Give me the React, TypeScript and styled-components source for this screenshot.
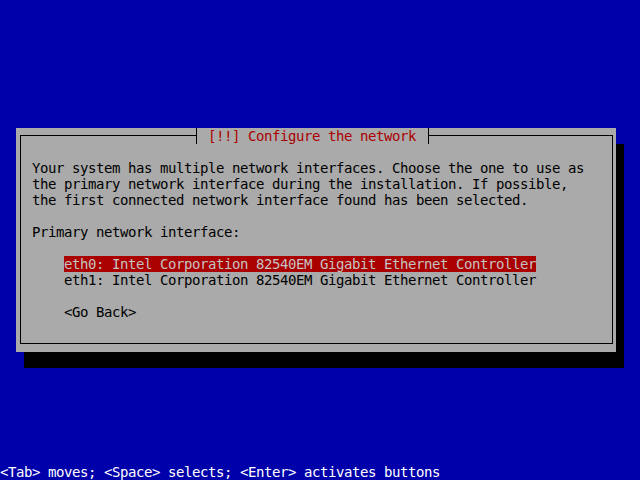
import React from 'react';
import styled, { createGlobalStyle, css } from 'styled-components';

const GlobalStyle = createGlobalStyle`
  html, body {
    margin: 0;
    padding: 0;
    background: #0000aa;
  }
  body {
    width: 640px;
    height: 480px;
    overflow: hidden;
  }
`;

// 80x30 text console, each cell is 8x16
const Screen = styled.div`
  width: 640px;
  height: 480px;
  box-sizing: border-box;
  padding-top: 128px;
  display: flex;
  flex-direction: column;
  background: #0000aa;
  font-family: 'DejaVu Sans Mono', 'Liberation Mono', monospace;
  font-size: 14px;
  letter-spacing: -0.43px;
  line-height: 16px;
`;

const Dialog = styled.div`
  margin-left: 16px;
  width: 600px;
  height: 224px;
  box-sizing: border-box;
  padding: 0 3px 8px 4px;
  display: flex;
  flex-direction: column;
  background: #aaaaaa;
  box-shadow: 8px 16px 0 #000;
`;

const Header = styled.div`
  display: flex;
  height: 16px;
  flex: none;
`;

interface SideProps {
  $side: 'left' | 'right';
}

const Segment = styled.div<SideProps>`
  align-self: flex-end;
  height: 9px;
  box-sizing: border-box;
  border-top: 1px solid #000;
  ${(p) =>
    p.$side === 'left'
      ? css`
          flex: 0 0 176px;
          border-left: 1px solid #000;
        `
      : css`
          flex: 1;
          border-right: 1px solid #000;
        `}
`;

const Title = styled.div`
  height: 16px;
  padding: 0 12px 0 11px;
  border-left: 1px solid #000;
  border-right: 1px solid #000;
  color: #aa0000;
  white-space: pre;
`;

const Frame = styled.div`
  flex: 1;
  display: flex;
  flex-direction: column;
  align-items: flex-start;
  padding: 16px 0 0 11px;
  border: 1px solid #000;
  border-top: none;
  color: #000;
`;

interface LineProps {
  $gap?: number;
  $indent?: boolean;
}

const Line = styled.div<LineProps>`
  height: 16px;
  white-space: pre;
  margin-top: ${(p) => (p.$gap ?? 0) * 16}px;
  margin-left: ${(p) => (p.$indent ? 32 : 0)}px;
`;

const List = styled.div`
  display: flex;
  flex-direction: column;
  align-items: flex-start;
  margin: 16px 0 0 32px;
`;

const Item = styled.div<{ $active?: boolean }>`
  height: 16px;
  white-space: pre;
  color: #000;
  ${(p) =>
    p.$active &&
    css`
      background: #aa0000;
      color: #c4c4c4;
    `}
`;

const Status = styled.div`
  margin-top: auto;
  height: 16px;
  color: #ffffff;
  white-space: pre;
`;

const interfaces = [
  'eth0: Intel Corporation 82540EM Gigabit Ethernet Controller',
  'eth1: Intel Corporation 82540EM Gigabit Ethernet Controller',
];

export default function App() {
  return (
    <>
      <GlobalStyle />
      <Screen>
        <Dialog>
          <Header>
            <Segment $side="left" />
            <Title>[!!] Configure the network</Title>
            <Segment $side="right" />
          </Header>
          <Frame>
            <Line>Your system has multiple network interfaces. Choose the one to use as</Line>
            <Line>the primary network interface during the installation. If possible,</Line>
            <Line>the first connected network interface found has been selected.</Line>
            <Line $gap={1}>Primary network interface:</Line>
            <List>
              {interfaces.map((name, i) => (
                <Item key={name} $active={i === 0}>
                  {name}
                </Item>
              ))}
            </List>
            <Line $gap={1} $indent>
              {'<Go Back>'}
            </Line>
          </Frame>
        </Dialog>
        <Status>{'<Tab> moves; <Space> selects; <Enter> activates buttons'}</Status>
      </Screen>
    </>
  );
}
